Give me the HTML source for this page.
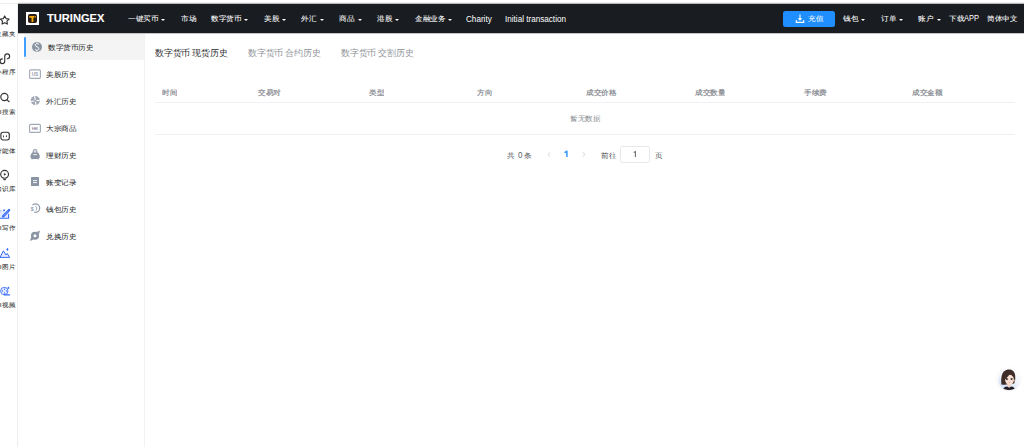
<!DOCTYPE html>
<html><head><meta charset="utf-8">
<style>
*{margin:0;padding:0;box-sizing:border-box}
html,body{width:1024px;height:447px;overflow:hidden;background:#fff;font-family:"Liberation Sans",sans-serif;position:relative}
.abs{position:absolute}
.L{transform:scale(.625)!important}
.z{position:absolute;transform-origin:0 0;transform:scale(.625,.575);white-space:nowrap;line-height:16px;font-size:12px;-webkit-text-stroke:.1px currentColor}
.nt.L{-webkit-text-stroke:.15px currentColor}
svg{position:absolute;overflow:visible}
#topline{left:0;top:3px;width:1024px;height:1px;background:linear-gradient(90deg,#ececec 0,#ececec 18px,#b9babc 18px)}
#topline2{left:18px;top:2px;width:1006px;height:1px;background:#efefef}
#vline{left:17px;top:3px;width:1px;height:444px;background:#ededed}
.lbl{font-size:10.8px;color:#333;text-align:right;width:60px;left:-22.5px}
#nav{left:18px;top:4px;width:1006px;height:29px;background:#191c21}
.nt{color:#fff}
.tri{position:absolute;width:0;height:0;border-left:2px solid transparent;border-right:2px solid transparent;border-top:2.6px solid #fff}
#btn{left:782.8px;top:10.8px;width:52.7px;height:16.2px;background:#1f8fff;border-radius:2.5px}
#side{left:143.8px;top:34.3px;width:1.1px;height:413px;background:#f2f2f2}
#shadow{left:18px;top:33px;width:1006px;height:1.3px;background:#c4c4c4}
#act{left:24px;top:34.4px;width:119.8px;height:25.8px;background:#f4f4f4}
#bar{left:24.1px;top:36.6px;width:2.4px;height:20.6px;background:#409eff;border-radius:1.2px}
.mt{color:#303133}
.tab{transform:scale(.625)!important;font-size:14px;color:#909399;-webkit-text-stroke:0}
.tab.on{color:#303133}
.th{color:#909399;font-weight:bold;-webkit-text-stroke:0}
.hl{position:absolute;left:155px;width:859.7px;height:1px;background:#edf0f5}
.pg{color:#606266}
#inp{left:620.3px;top:146.3px;width:30.2px;height:16.7px;border:1px solid #e6e8ec;border-radius:2.5px}
</style></head><body>
<div class="abs" id="topline"></div><div class="abs" id="topline2"></div><div class="abs" style="left:17px;top:3px;width:1px;height:30px;background:#c4c5c7"></div>
<div class="abs" id="vline"></div>

<!-- left browser strip -->
<svg style="left:0;top:0" width="17" height="447" viewBox="0 0 17 447">
<g fill="none" stroke="#333" stroke-width="1.15" stroke-linejoin="round" stroke-linecap="round">
<path d="M4.7 15.9 L6.05 18.6 L9.1 19.05 L6.9 21.2 L7.4 24.1 L4.7 22.7 L2 24.1 L2.5 21.2 L0.3 19.05 L3.35 18.6 Z"/>
<path d="M7.3 58.7 A2.45 2.45 0 1 0 4.75 56.2 L4.75 61.2 A2.35 2.35 0 1 1 2.3 58.9"/>
<circle cx="4.4" cy="97" r="3.6"/><path d="M7.1 99.9 L9.1 101.7"/>
<rect x="0.9" y="132.2" width="8.4" height="7.8" rx="2.2"/>
<path d="M4.6 179.4 A4 4 0 1 1 4.6 179.4 Z" stroke="none"/>
<circle cx="4.6" cy="174.3" r="3.9"/>
</g>
<rect x="3" y="135.1" width="0.9" height="2.3" rx="0.45" fill="#333"/>
<path d="M5.6 136.2 L7 135.1 L7 137.3 Z" fill="#333"/>
<path d="M3.9 172.9 L6.2 174.3 L3.9 175.7 Z" fill="#333"/>
<path d="M2.9 178.4 Q4.6 179.4 6.3 178.4 L5.6 180 Q4.6 180.6 3.6 180 Z" fill="#333"/>
<rect x="-1" y="210.8" width="9.6" height="7.4" fill="#e6ecff"/>
<path d="M-1 210.8 H1.8" fill="none" stroke="#9fb6fb" stroke-width="1"/>
<path d="M8.6 214.2 V218.2 H-1" fill="none" stroke="#3b6ef6" stroke-width="1.1" stroke-linecap="round"/>
<path d="M3.1 216.3 L9.1 210.1" stroke="#3b6ef6" stroke-width="2.4" stroke-linecap="round"/>
<path d="M3.9 215.5 L8.3 210.9" stroke="#b8cbff" stroke-width="0.7" stroke-dasharray="0.9 0.5"/>
<circle cx="4.1" cy="210.3" r="0.95" fill="#3b6ef6"/>
<path d="M0 257.4 L3.4 250.8 L6 255 L7.2 253.4 L9.6 257.4 Z" fill="#e3eaff" stroke="#3b6ef6" stroke-width="1" stroke-linejoin="round"/>
<path d="M7.4 247.8 L8.6 249.4 L7.4 251 L6.2 249.4 Z" fill="#3b6ef6"/>
<circle cx="4.3" cy="291" r="3.7" fill="#eef2ff" stroke="#4a78f6" stroke-width="0.95"/>
<path d="M4.3 294.9 H9.6" stroke="#3b6ef6" stroke-width="1.1" stroke-linecap="round"/>
<g fill="#3b6ef6"><circle cx="4.5" cy="289.3" r="0.75"/><circle cx="4.5" cy="293" r="0.75"/><circle cx="2.5" cy="291.1" r="0.75"/><circle cx="6.5" cy="291.1" r="0.75"/>
<path d="M8.4 286.6 L9.5 287.9 L8.4 289.2 L7.3 287.9 Z"/></g>
</svg>
<div class="z lbl" style="top:29.34px">收藏夹</div>
<div class="z lbl" style="top:67.34px">小程序</div>
<div class="z lbl" style="top:106.94px">AI搜索</div>
<div class="z lbl" style="top:145.64px">智能体</div>
<div class="z lbl" style="top:184.24px">知识库</div>
<div class="z lbl" style="top:223.44px">AI写作</div>
<div class="z lbl" style="top:262.04px">AI图片</div>
<div class="z lbl" style="top:300.34px">AI视频</div>

<!-- navbar -->
<div class="abs" id="nav"></div>
<div class="abs" style="left:26px;top:11.8px;width:13.2px;height:13.4px;background:#fff"></div>
<div class="abs" style="left:28.1px;top:13.9px;width:9.4px;height:9.6px;background:#2a1b15;border-radius:2px"></div>
<svg style="left:0;top:0" width="1" height="1"><path d="M29.3 16.1 H34.3 V17.7 H33.4 V21.9 H31.5 V17.7 H29.3 Z" fill="#f5aa05"/><rect x="34.8" y="16.1" width="1.2" height="1.3" fill="#f5aa05"/></svg>
<div class="z nt L" style="left:46.6px;top:13.3px;font-size:17.8px;line-height:16px;font-weight:bold;letter-spacing:0">TURINGEX</div>

<div class="z nt" style="left:127.8px;top:13.89px">一键买币</div><div class="tri" style="left:161.3px;top:19.1px"></div>
<div class="z nt" style="left:180.8px;top:13.89px">市场</div>
<div class="z nt" style="left:210.8px;top:13.89px">数字货币</div><div class="tri" style="left:244.3px;top:19.1px"></div>
<div class="z nt" style="left:263.8px;top:13.89px">美股</div><div class="tri" style="left:282px;top:19.1px"></div>
<div class="z nt" style="left:301.3px;top:13.89px">外汇</div><div class="tri" style="left:319.5px;top:19.1px"></div>
<div class="z nt" style="left:339px;top:13.89px">商品</div><div class="tri" style="left:357.6px;top:19.1px"></div>
<div class="z nt" style="left:376.6px;top:13.89px">港股</div><div class="tri" style="left:395.3px;top:19.1px"></div>
<div class="z nt" style="left:415px;top:13.89px">金融业务</div><div class="tri" style="left:448px;top:19.1px"></div>
<div class="z nt L" style="left:465.6px;top:14.1px;font-size:13px;letter-spacing:0;-webkit-text-stroke:0">Charity</div>
<div class="z nt L" style="left:505px;top:14.1px;font-size:13px;letter-spacing:0;-webkit-text-stroke:0">Initial transaction</div>

<div class="abs" id="btn"></div>
<svg style="left:0;top:0" width="1" height="1"><path d="M800 14.6 V19.4" stroke="#fff" stroke-width="1.1"/><path d="M797.6 18.2 L802.4 18.2 L800 20.8 Z" fill="#fff"/><path d="M796.3 19.9 V22.4 H803.7 V19.9" fill="none" stroke="#fff" stroke-width="1.1"/></svg>
<div class="z nt" style="left:808.4px;top:14.2px">充值</div>
<div class="z nt" style="left:842.8px;top:13.89px">钱包</div><div class="tri" style="left:861px;top:18.5px"></div>
<div class="z nt" style="left:880.6px;top:13.89px">订单</div><div class="tri" style="left:898.5px;top:18.5px"></div>
<div class="z nt" style="left:918.2px;top:13.89px">账户</div><div class="tri" style="left:936.6px;top:18.5px"></div>
<div class="z nt" style="left:949px;top:13.89px">下载</div><div class="z nt" style="left:963.8px;top:13.4px;-webkit-text-stroke:0;font-size:13.5px;transform:scale(.56,.66)">APP</div>
<div class="z nt" style="left:986.8px;top:13.89px">简体中文</div>

<!-- sidebar -->
<div class="abs" id="shadow"></div>
<div class="abs" id="side"></div>
<div class="abs" id="act"></div>
<div class="abs" id="bar"></div>
<svg style="left:0;top:0" width="1" height="1"><circle cx="37" cy="47" r="5" fill="#8a94a3"/><path d="M39 44.6 C38.6 43.9 37.9 43.6 37.1 43.6 C36 43.6 35.2 44.2 35.2 45.1 C35.2 47 38.9 46.6 38.9 48.7 C38.9 49.7 38.1 50.3 37 50.3 C36.1 50.3 35.3 49.9 34.9 49.2" fill="none" stroke="#fff" stroke-width="1"/><path d="M37.05 42.6 V43.6 M37.05 50.3 V51.4" stroke="#fff" stroke-width="0.9"/></svg>
<div class="z mt" style="left:47.6px;top:43.14px">数字货币历史</div>

<svg style="left:0;top:0" width="1" height="1"><rect x="29.6" y="69.9" width="10.8" height="8.4" rx="1" fill="none" stroke="#a3abb6" stroke-width="1.15"/><text x="35" y="75.9" font-size="4.8" text-anchor="middle" fill="#98a1ad" font-weight="bold" font-family="Liberation Sans">US</text></svg>
<div class="z mt" style="left:45.8px;top:70.14px">美股历史</div>

<svg style="left:0;top:0" width="1" height="1"><circle cx="35.3" cy="100.6" r="4.6" fill="#a0a9b5"/><g transform="rotate(-8 35.3 100.6)"><path d="M30.8 100.9 H34.4 M36.3 100.9 H39.8 M35.3 96.2 V99.8 M35.3 101.9 V105" stroke="#fff" stroke-width="1.15"/></g><path d="M38.2 96.4 L40.2 98.4" stroke="#fff" stroke-width="1"/></svg>
<div class="z mt" style="left:45.8px;top:97.24px">外汇历史</div>

<svg style="left:0;top:0" width="1" height="1"><rect x="29.6" y="124.4" width="10.8" height="8" rx="1" fill="none" stroke="#a3abb6" stroke-width="1.15"/><text x="35" y="130.1" font-size="4.2" text-anchor="middle" fill="#7d8796" font-weight="bold" font-family="Liberation Sans">HK</text></svg>
<div class="z mt" style="left:45.8px;top:124.34px">大宗商品</div>

<svg style="left:0;top:0" width="1" height="1"><path d="M33.3 153 V151.3 C33.3 150.1 34.1 149.5 35.1 149.5 C36.1 149.5 36.9 150.1 36.9 151.3 V153" fill="#dde1e7" stroke="#9aa3b0" stroke-width="1.15"/><path d="M32.2 152.6 H38 C38.8 153.6 39.8 155.2 39.8 156.8 C39.8 158.2 38.9 158.9 37.8 158.9 H32.4 C31.3 158.9 30.4 158.2 30.4 156.8 C30.4 155.2 31.4 153.6 32.2 152.6 Z" fill="#8c96a5"/><rect x="33.3" y="154.2" width="3.6" height="0.9" fill="#fff"/><path d="M32 158.6 V159.6 M38.2 158.6 V159.6" stroke="#8c96a5" stroke-width="0.8"/></svg>
<div class="z mt" style="left:45.8px;top:151.24px">理财历史</div>

<svg style="left:0;top:0" width="1" height="1"><rect x="31" y="177" width="8" height="9" rx="0.6" fill="#8a94a3"/><rect x="33" y="180.2" width="4" height="0.9" fill="#fff"/><rect x="33" y="182.2" width="4" height="0.9" fill="#fff"/></svg>
<div class="z mt" style="left:45.8px;top:178.14px">账变记录</div>

<svg style="left:0;top:0" width="1" height="1"><path d="M32.4 205.2 C33.2 204.3 34.3 203.8 35.5 203.8 C37.9 203.8 39.7 205.7 39.7 208.1 C39.7 210.5 37.9 212.4 35.5 212.4 C35.1 212.4 34.7 212.3 34.3 212.2" fill="none" stroke="#8f99a7" stroke-width="1.15"/><path d="M35.2 206 C36.5 206.7 37 208 36.6 209.3 L35.9 210.5" fill="none" stroke="#8f99a7" stroke-width="1"/><text x="32.2" y="210.8" font-size="5.2" text-anchor="middle" fill="#8f99a7" font-family="Liberation Sans" font-weight="bold">$</text></svg>
<div class="z mt" style="left:45.8px;top:205.04px">钱包历史</div>

<svg style="left:0;top:0" width="1" height="1"><circle cx="35" cy="235.7" r="2.8" fill="none" stroke="#8a94a3" stroke-width="2.5"/><path d="M36.7 231.9 L39.9 230.5 L39 234.2 Z" fill="#8a94a3"/><path d="M33.3 239.5 L30.1 240.9 L31 237.2 Z" fill="#8a94a3"/></svg>
<div class="z mt" style="left:45.8px;top:232.24px">兑换历史</div>

<!-- tabs -->
<div class="z tab on" style="left:154.6px;top:48.00px">数字货币 现货历史</div>
<div class="z tab" style="left:247.7px;top:48.00px">数字货币 合约历史</div>
<div class="z tab" style="left:340.8px;top:48.00px">数字货币 交割历史</div>

<!-- table -->
<div class="z th" style="left:161.6px;top:87.84px">时间</div>
<div class="z th" style="left:258.3px;top:87.84px">交易对</div>
<div class="z th" style="left:368.9px;top:87.84px">类型</div>
<div class="z th" style="left:477.3px;top:87.84px">方向</div>
<div class="z th" style="left:586.3px;top:87.84px">成交价格</div>
<div class="z th" style="left:694.7px;top:87.84px">成交数量</div>
<div class="z th" style="left:803.7px;top:87.84px">手续费</div>
<div class="z th" style="left:912.3px;top:87.84px">成交金额</div>
<div class="hl" style="top:102px"></div>
<div class="z pg" style="left:569.7px;top:113.94px;color:#909399">暂无数据</div>
<div class="hl" style="top:134.4px"></div>

<!-- pagination -->
<div class="z pg" style="left:507.4px;top:150.54px;font-size:13px">共</div><div class="z pg L" style="left:517.8px;top:149.5px;font-size:13px;-webkit-text-stroke:0">0</div><div class="z pg" style="left:524.2px;top:150.54px;font-size:13px">条</div>
<svg style="left:547.2px;top:152px" width="4" height="5" viewBox="0 0 4 5"><path d="M3.4 0.3 L1 2.5 L3.4 4.7" fill="none" stroke="#c6c9cf" stroke-width="0.75"/></svg>
<svg style="left:0;top:0" width="1" height="1"><path d="M566.9 157.1 V151.3 L564.6 152.7" fill="none" stroke="#409eff" stroke-width="1.6" stroke-linejoin="round"/></svg>
<svg style="left:582px;top:152px" width="4" height="5" viewBox="0 0 4 5"><path d="M0.6 0.3 L3 2.5 L0.6 4.7" fill="none" stroke="#c6c9cf" stroke-width="0.75"/></svg>
<div class="z pg" style="left:601.1px;top:150.54px;font-size:13px">前往</div>
<div class="abs" id="inp"></div>
<svg style="left:0;top:0" width="1" height="1"><path d="M635.4 157.1 V151.4 L633.7 152.6" fill="none" stroke="#6b6e73" stroke-width="1.1" stroke-linejoin="round"/></svg>
<div class="z pg" style="left:654.9px;top:150.54px;font-size:13px">页</div>

<!-- avatar -->
<div class="abs" style="left:997px;top:367.5px;width:22.5px;height:22.5px;border-radius:50%;box-shadow:0 0.5px 2px rgba(0,0,0,0.12)"></div>
<svg style="left:997.5px;top:367.5px" width="22" height="22" viewBox="0 0 22 22">
<defs><linearGradient id="ag" x1="0.7" y1="0" x2="0.3" y2="1"><stop offset="0" stop-color="#ffffff"/><stop offset="0.55" stop-color="#eef3fd"/><stop offset="1" stop-color="#c9daf8"/></linearGradient>
<clipPath id="ac"><circle cx="11" cy="11" r="10.9"/></clipPath></defs>
<circle cx="11" cy="11" r="10.9" fill="url(#ag)"/>
<g clip-path="url(#ac)">
<path d="M3.4 16.6 C2.8 11 3.4 5.6 6.2 3.2 C8.8 1 13.4 1 15.6 3.4 C17.4 5.4 17.6 9 17 13 L16.2 15.6 L13 16 L6 16.8 Z" fill="#3e2d29"/>
<path d="M9.2 15.6 H13.2 V18.6 L11.2 19.6 L9.2 18.6 Z" fill="#f3d2c6"/>
<ellipse cx="11.5" cy="11.8" rx="4.4" ry="5" fill="#f8ddd2"/>
<path d="M6.2 12.4 C6.2 7.6 8 4.4 11.4 4 C14.2 3.8 16 5.6 16.4 8.6 C14.6 7.2 13.2 6.2 12.2 5.2 C11 7.4 8.6 9.8 6.2 12.4 Z" fill="#3e2d29"/>
<path d="M5.2 9 C4.8 12 5 14.6 5.6 16.6 L7 16.2 C6.6 14 6.6 11.4 7.1 9 Z" fill="#3e2d29"/>
<ellipse cx="8.9" cy="11" rx="1.05" ry="1" fill="#2a2530"/><ellipse cx="13.6" cy="11" rx="1.05" ry="1" fill="#2a2530"/>
<circle cx="9.2" cy="10.7" r="0.3" fill="#fff"/><circle cx="13.9" cy="10.7" r="0.3" fill="#fff"/>
<ellipse cx="11.3" cy="14.4" rx="0.9" ry="0.45" fill="#e58a8a"/>
<ellipse cx="16.1" cy="12.4" rx="0.7" ry="1" fill="#f0c8b8"/>
<path d="M4.2 23 C4.6 20 7 18.6 9.2 18.4 L11.2 19.8 L13.2 18.4 C15.4 18.6 17.2 20 17.6 23 Z" fill="#1f1b21"/>
</g></svg>
</body></html>
